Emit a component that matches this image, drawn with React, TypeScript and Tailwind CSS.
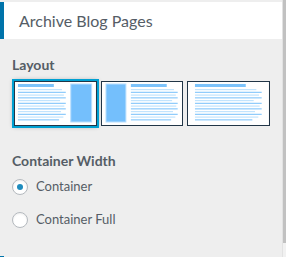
import React from "react";

type Kind = "right" | "left" | "full";

const lineWidths = [0.92, 1, 0.96, 1, 0.88, 1, 0.97, 1, 0.9, 1, 0.95, 0.86];

function Thumb({ kind }: { kind: Kind }) {
  // inner area 81x43
  let textX = 3;
  let textW = 48;
  let titleW = 36;
  let side: { x: number; w: number } | null = null;
  if (kind === "right") {
    side = { x: 56, w: 21 };
  } else if (kind === "left") {
    side = { x: 4, w: 20 };
    textX = 29;
    textW = 47;
  } else {
    textX = 7;
    textW = 67;
    titleW = 51;
  }
  return (
    <svg width="100%" height="43" viewBox="0 0 81 43" preserveAspectRatio="none" className="block">
      <rect x="0" y="0" width="81" height="43" fill="#ffffff" />
      <rect x={textX} y="2" width={titleW} height="3" fill="#7cc3fb" />
      {lineWidths.map((w, i) => (
        <rect
          key={i}
          x={textX}
          y={7 + i * 2.75}
          width={textW * w}
          height="1.2"
          fill={i % 2 === 0 ? "#c2e4fd" : "#8ccafb"}
        />
      ))}
      {side && (
        <rect
          x={side.x}
          y="2"
          width={side.w}
          height="38"
          fill="#74bffc"
          stroke="#b8defd"
          strokeWidth="1"
        />
      )}
    </svg>
  );
}

function Radio({ label, checked }: { label: string; checked?: boolean }) {
  return (
    <label className="flex items-center gap-[8px] h-[16px]">
      <span className="w-[16px] h-[16px] rounded-full border border-[#b4b9be] bg-white flex items-center justify-center shadow-[inset_0_1px_2px_rgba(0,0,0,0.07)]">
        {checked && <span className="w-[6px] h-[6px] rounded-full bg-[#1e8cbe]" />}
      </span>
      <span className="text-[13px] text-[#555d66]">{label}</span>
    </label>
  );
}

export default function App() {
  return (
    <div className="w-[286px] h-[257px] bg-[#eeeeee] flex overflow-hidden" style={{ fontFamily: 'Lato, "Open Sans", sans-serif' }}>
      <div className="w-[282px] flex flex-col pt-[2px]">
        <div className="h-[37px] bg-white border-l-4 border-[#0073aa] pl-[15px] flex items-center text-[16px] text-[#555d66]">
          Archive Blog Pages
        </div>

        <div className="pl-[12px] pr-[12px] mt-[16px]">
          <div className="text-[14px] leading-[20px] font-bold text-[#555d66]">Layout</div>
          <div className="grid grid-cols-3 gap-[4px] mt-[6px] pl-[2px]">
            <div className="border border-[#213547] ring-2 ring-[#00a0d2] shadow-[0_0_5px_rgba(0,0,0,0.45)]">
              <Thumb kind="right" />
            </div>
            <div className="border border-[#213547]">
              <Thumb kind="left" />
            </div>
            <div className="border border-[#213547]">
              <Thumb kind="full" />
            </div>
          </div>

          <div className="text-[14px] leading-[20px] font-bold text-[#555d66] mt-[25px]">Container Width</div>
          <div className="flex flex-col gap-[17px] mt-[8px]">
            <Radio label="Container" checked />
            <Radio label="Container Full" />
          </div>
        </div>
        <div className="mt-auto h-[1px] border-l-4 border-[#0073aa]" />
      </div>
      <div className="w-[4px] border-l border-[#e2e2e2] flex flex-col">
        <div className="h-[243px] bg-[#c1c1c1]" />
        <div className="flex-1 bg-[#f1f1f1]" />
      </div>
    </div>
  );
}
